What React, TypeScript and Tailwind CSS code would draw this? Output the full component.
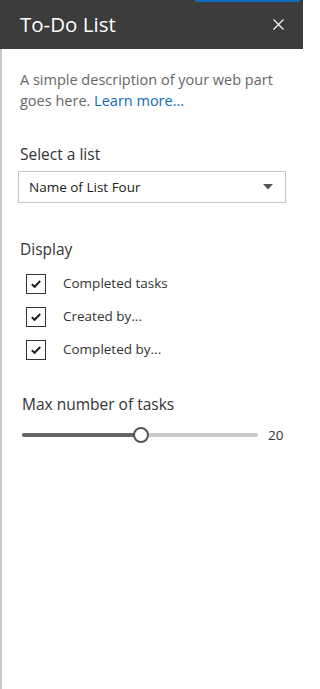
import { X } from "lucide-react";

const font = { fontFamily: '"Open Sans", "Noto Sans", sans-serif' };

function Check({ label }: { label: string }) {
  return (
    <div className="flex h-[33px] items-center">
      <span className="ml-[8px] flex h-[20px] w-[20px] items-center justify-center border-[1.5px] border-[#333]">
        <svg width="12" height="10" viewBox="0 0 12 10">
          <path d="M1.8 5.2 L4.6 7.8 L10.2 2" fill="none" stroke="#222" strokeWidth="2" />
        </svg>
      </span>
      <span className="ml-[17px] text-[13.5px] text-[#333]">{label}</span>
    </div>
  );
}

export default function App() {
  return (
    <div className="flex h-[689px] w-[303px] flex-col bg-white" style={font}>
      {/* Header */}
      <div className="relative flex h-[49px] shrink-0 items-center justify-between bg-[#3c3c3c] pl-[20px] pr-[15px]">
        <div className="absolute right-[3px] top-0 h-[2px] w-[105px] bg-[#0f6cbd]" />
        <span className="text-[20.5px] text-white">To-Do List</span>
        <X className="h-[19px] w-[19px] text-white" strokeWidth={1.4} />
      </div>

      {/* Body */}
      <div className="flex flex-1 flex-col border-l-2 border-[#c8c8c8] pl-[16px] pr-[17px]">
        <p className="mt-[20px] pl-[2px] text-[14.5px] leading-[21px] text-[#666]">
          A simple description of your web part goes here.{" "}
          <span className="text-[#0f6cbd]">Learn more...</span>
        </p>

        <div className="mt-[32px] pl-[2px] text-[15.5px] font-medium leading-[22px] text-[#333]">Select a list</div>
        <div className="mt-[6px] flex h-[32px] items-center justify-between border border-[#c8c8c8] pl-[10px] pr-[12px]">
          <span className="text-[13.5px] text-[#222]">Name of List Four</span>
          <svg width="10" height="6" viewBox="0 0 10 6">
            <path d="M0 0 L10 0 L5 5.5 Z" fill="#555" />
          </svg>
        </div>

        <div className="mt-[35px] pl-[2px] text-[15.5px] font-medium leading-[22px] text-[#333]">Display</div>
        <div className="mt-[7px] flex flex-col">
          <Check label="Completed tasks" />
          <Check label="Created by..." />
          <Check label="Completed by..." />
        </div>

        <div className="mt-[27px] pl-[4px] text-[15.5px] font-medium leading-[22px] text-[#333]">Max number of tasks</div>
        <div className="mt-[12px] flex h-[16px] items-center">
          <div className="relative ml-[4px] h-[4px] w-[236px] rounded-full bg-[#c8c8c8]">
            <div className="absolute left-0 top-0 h-[4px] w-[119px] rounded-full bg-[#666]" />
            <div className="absolute left-[111px] top-[-6px] h-[16px] w-[16px] rounded-full border-2 border-[#555] bg-white" />
          </div>
          <span className="ml-[10px] text-[13.5px] text-[#333]">20</span>
        </div>
      </div>
    </div>
  );
}
